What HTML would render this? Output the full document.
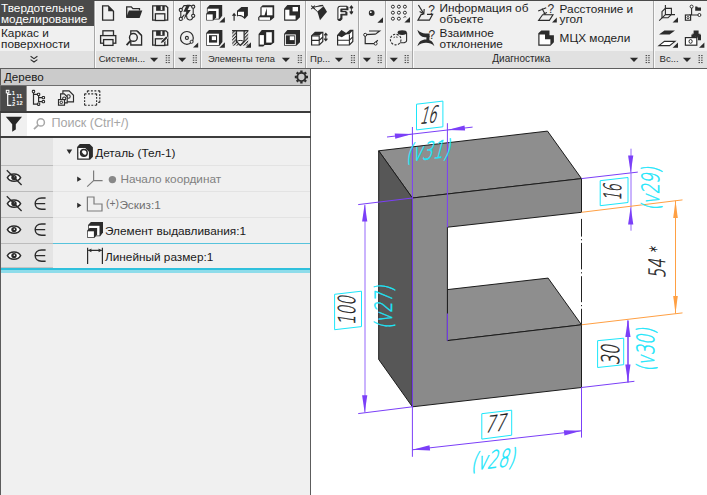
<!DOCTYPE html>
<html lang="ru">
<head>
<meta charset="utf-8">
<title>Деталь</title>
<style>
html,body{margin:0;padding:0;}
body{width:707px;height:495px;overflow:hidden;background:#fff;position:relative;
 font-family:"Liberation Sans","DejaVu Sans",sans-serif;font-size:11.8px;color:#1e1e1e;}
.abs{position:absolute;}
#tb{position:absolute;left:0;top:0;width:707px;height:68px;background:#f0f0f0;}
.sep{position:absolute;top:1px;width:1px;height:67px;background:#a8a8a8;}
.sep::after{content:"";position:absolute;left:1px;top:0;width:1px;height:67px;background:#f9f9f9;}
.lab{position:absolute;top:51.3px;height:16.7px;background:#e1e1e1;}
.lt{position:absolute;top:53px;font-size:9.6px;line-height:12px;color:#2a2a2a;white-space:nowrap;}
.tt{position:absolute;font-size:11.8px;line-height:10.6px;white-space:nowrap;color:#1e1e1e;}
#tree{position:absolute;left:0;top:69px;width:311px;height:426px;background:#f0f0f0;}
.rt{position:absolute;font-size:11.8px;line-height:14px;white-space:nowrap;color:#1a1a1a;}
svg{position:absolute;left:0;top:0;}
</style>
</head>
<body>
<!-- ================= TOOLBAR ================= -->
<div id="tb">
 <div class="abs" style="left:0;top:0;width:707px;height:1px;background:#4a4a4a;"></div>
 <div class="abs" style="left:0;top:0;width:94px;height:25.5px;background:#4a4a4a;"></div>
 <div class="tt" style="left:1px;top:3px;color:#fff;">Твердотельное<br>моделирование</div>
 <div class="tt" style="left:1px;top:28px;">Каркас и<br>поверхности</div>
 <div class="lab" style="left:0;width:94px;"></div>
 <div class="lab" style="left:95px;width:612px;"></div>
 <div class="sep" style="left:94px;"></div>
 <div class="sep" style="left:173px;"></div>
 <div class="sep" style="left:200px;"></div>
 <div class="sep" style="left:305px;"></div>
 <div class="sep" style="left:358px;"></div>
 <div class="sep" style="left:385px;"></div>
 <div class="sep" style="left:412px;"></div>
 <div class="sep" style="left:653px;"></div>
 <div class="abs" style="left:0;top:67.8px;width:707px;height:1.2px;background:#5e5e5e;"></div>
 <div class="lt" style="left:98.7px;">Системн...</div>
 <div class="lt" style="left:208px;font-size:9.3px;">Элементы тела</div>
 <div class="lt" style="left:310px;">Пр...</div>
 <div class="lt" style="left:492.3px;font-size:10px;">Диагностика</div>
 <div class="lt" style="left:659.5px;">Вс...</div>
 <div class="tt" style="left:439.6px;top:3.4px;">Информация об<br>объекте</div>
 <div class="tt" style="left:439.6px;top:28.4px;">Взаимное<br>отклонение</div>
 <div class="tt" style="left:559.6px;top:3.5px;">Расстояние и<br>угол</div>
 <div class="tt" style="left:559.6px;top:33px;">МЦХ модели</div>
</div>
<svg width="707" height="68" viewBox="0 0 707 68">
<defs><pattern id="hatch" width="2.4" height="2.4" patternUnits="userSpaceOnUse" patternTransform="rotate(-45)"><rect width="2.4" height="1.1" fill="#2b2b2b"/></pattern></defs>
<path d="M102.6,5.9 h5.6 l5.3,5.3 v9 h-10.9 z" fill="#f0f0f0" stroke="#2b2b2b" stroke-width="1.3" stroke-linejoin="miter"/>
<path d="M108.2,5.9 l5.3,5.3 h-5.3 z" fill="#2b2b2b"/>
<path d="M126.7,17.3 v-10.4 h4.6 l1.6,1.7 h6.6 v2" fill="none" stroke="#2b2b2b" stroke-width="1.3"/>
<path d="M128.9,10.4 h13.4 l-2.7,7.5 h-13.5 z" fill="#2b2b2b"/>
<path d="M152.7,5.8 h13.2 l1.8,1.8 v12.6 h-15 z" fill="#f0f0f0" stroke="#2b2b2b" stroke-width="1.3"/><rect x="156.1" y="5.8" width="8.6" height="5" fill="#2b2b2b"/><rect x="160.7" y="6.2" width="1.6" height="3.8" fill="#f0f0f0"/><rect x="155.4" y="13.8" width="9.4" height="6.7" fill="#f0f0f0" stroke="#2b2b2b" stroke-width="1.3"/>
<rect x="102.9" y="30.8" width="10.6" height="5" fill="#f0f0f0" stroke="#2b2b2b" stroke-width="1.3"/>
<rect x="100.6" y="35.6" width="15.2" height="7.6" fill="#f0f0f0" stroke="#2b2b2b" stroke-width="1.3"/>
<rect x="103.6" y="39.6" width="9.4" height="5.8" fill="#f0f0f0" stroke="#2b2b2b" stroke-width="1.3"/>
<path d="M130.8,30.8 h6 l4.8,4.8 v9.4 h-10.8 z" fill="#f0f0f0" stroke="#2b2b2b" stroke-width="1.3"/>
<path d="M136.2,30.8 l5.4,5.4 v-1.8 l-3.6,-3.6 z" fill="#2b2b2b"/>
<circle cx="133.4" cy="37.4" r="3.9" fill="#f0f0f0" stroke="#2b2b2b" stroke-width="1.4"/>
<path d="M130.6,40.6 l-4,4.6" stroke="#2b2b2b" stroke-width="1.8" fill="none"/>
<path d="M152.7,30.8 h13.2 l1.8,1.8 v12.6 h-15 z" fill="#f0f0f0" stroke="#2b2b2b" stroke-width="1.3"/><rect x="156.1" y="30.8" width="8.6" height="5" fill="#2b2b2b"/><rect x="160.7" y="31.2" width="1.6" height="3.8" fill="#f0f0f0"/><rect x="155.4" y="38.8" width="9.4" height="6.7" fill="#f0f0f0" stroke="#2b2b2b" stroke-width="1.3"/>
<path d="M160.2,43.6 l1,-2.6 5,-5 1.8,1.8 -5,5 z" fill="#2b2b2b" stroke="#fff" stroke-width="0.8"/>
<path d="M180.8,10 V18.9 M193.2,6.7 V15.8 M180.8,10 L184,5.6 H191.6 M180.8,18.9 L184.4,14.6 M186.6,15.6 C186.6,21.4 192.4,21.4 193.2,15.8" fill="none" stroke="#2b2b2b" stroke-width="1.1"/>
<path d="M190.2,4.8 h-3.4 l-3.4,7 h3 l-3,8.2 7.4,-10 h-3.2 z" fill="#2b2b2b"/>
<circle cx="180.8" cy="10" r="1.6" fill="#f0f0f0" stroke="#2b2b2b" stroke-width="1.1"/>
<circle cx="193.2" cy="6.7" r="1.6" fill="#f0f0f0" stroke="#2b2b2b" stroke-width="1.1"/>
<circle cx="180.8" cy="18.9" r="1.6" fill="#f0f0f0" stroke="#2b2b2b" stroke-width="1.1"/>
<circle cx="193.2" cy="15.8" r="1.6" fill="#f0f0f0" stroke="#2b2b2b" stroke-width="1.1"/>
<circle cx="186.9" cy="37.9" r="6.4" fill="#f0f0f0" stroke="#2b2b2b" stroke-width="1.2"/>
<circle cx="186.9" cy="37.9" r="1.5" fill="#f0f0f0" stroke="#2b2b2b" stroke-width="1.1"/>
<circle cx="191.6" cy="41.8" r="1.5" fill="#f0f0f0" stroke="#2b2b2b" stroke-width="1"/>
<path d="M198.2,47.6 h-5.2 l5.2,-5.2 z" fill="#2b2b2b"/>
<path d="M206.9,8 l2.8,-3 h12.5 v10.799999999999999 l-2.8,3.6 h-12.5 z" fill="#2b2b2b"/><rect x="207.6" y="8.7" width="11.100000000000001" height="10.0" fill="#fff"/>
<path d="M206.2,13.7 l2.7,-2.7 h7.200000000000017 v6.3000000000000025 l-2.7,3.3000000000000003 h-7.200000000000017 z" fill="#2b2b2b"/><rect x="206.89999999999998" y="14.399999999999999" width="5.800000000000017" height="5.500000000000002" fill="#fff"/>
<path d="M224.9,22.6 h-5.6 l5.6,-5.6 z" fill="#2b2b2b"/>
<path d="M234.1,20.8 v-6.6" fill="none" stroke="#2b2b2b" stroke-width="1.2"/>
<path d="M231.8,15.8 l2.3,-3 2.3,3 z" fill="#2b2b2b"/>
<path d="M237,10.8 l4.4,-3.8 h6.5 v8.4 l-3.2,3.6 c-2.6,-3 -5,-3.6 -7.7,-2.6 z" fill="#2b2b2b"/>
<path d="M238,11.8 h6 v5 c-2,-1.8 -3.8,-2.2 -6,-1.6 z" fill="#fff"/>
<path d="M260.4,15 v-7.6 l2.2,-2.2 h11.6 v12.2 l-3.6,3.2 h-12.4 v-3.4 z" fill="#2b2b2b"/>
<rect x="261.6" y="7.3" width="10.9" height="8" fill="#fff"/>
<rect x="259.4" y="17.3" width="10.6" height="2.6" fill="#fff"/>
<path d="M266.8,8 l-2.6,8.6 h2.8 z" fill="#2b2b2b"/>
<path d="M284.1,8.7 l3.3,-3.7 h12.6 v12.2 l-3.6,3.5 h-12.3 z" fill="#2b2b2b"/>
<path d="M285.2,9.8 h4.2 v5.8 h6.2 v4 h-10.4 z" fill="#fff"/>
<rect x="292.6" y="7" width="5.4" height="4.4" fill="#fff"/>
<path d="M206.2,33 l2.8,-3 h13.400000000000006 v12.100000000000003 l-2.8,3.6 h-13.400000000000006 z" fill="#2b2b2b"/><rect x="206.89999999999998" y="33.7" width="12.000000000000007" height="11.300000000000004" fill="#fff"/>
<rect x="209" y="35.2" width="8.1" height="7.4" fill="#2b2b2b"/>
<rect x="211.8" y="36.3" width="4.2" height="3.8" fill="#fff"/>
<path d="M224.9,47.8 h-5.6 l5.6,-5.6 z" fill="#2b2b2b"/>
<rect x="232.2" y="30.4" width="16" height="15.2" fill="url(#hatch)"/>
<path d="M232,30.7 h16.4" stroke="#2b2b2b" stroke-width="1.3"/>
<path d="M236.5,30.8 v10.7 l3.8,4 3.8,-4 v-10.7 z" fill="#f6f6f6" stroke="#2b2b2b" stroke-width="1.2"/>
<path d="M236.5,41.5 c2,-1.4 5.6,-1.4 7.6,0" fill="none" stroke="#2b2b2b" stroke-width="1"/>
<path d="M251,47.8 h-5.6 l5.6,-5.6 z" fill="#2b2b2b"/>
<path d="M258.6,34 l3.2,-4 h12.4 v12.6 l-3.4,2.4 h-6 l-1.6,1.6 h-4.6 z" fill="#2b2b2b"/>
<rect x="259.7" y="35.1" width="4.2" height="9.5" fill="#fff"/>
<rect x="266.2" y="32.2" width="5.6" height="10.4" fill="#fff"/>
<path d="M284.1,33.7 l3.3,-3.7 h12.6 v12.2 l-3.6,3.5 h-12.3 z" fill="#2b2b2b"/>
<rect x="285.4" y="34.9" width="9.9" height="9.7" fill="none" stroke="#fff" stroke-width="0.9"/>
<rect x="289.8" y="36.3" width="4.4" height="3.8" fill="#fff"/>
<path d="M311.2,5.6 l3.6,3.6 M314.8,5.6 l-3.6,3.6" stroke="#2b2b2b" stroke-width="1.1"/>
<path d="M313,7.4 l8.6,-2 M313,7.4 l4.6,4.4" stroke="#2b2b2b" stroke-width="1"/>
<path d="M317.4,11.4 l6.2,-5.2 3.4,5.6 -7,8.4 z" fill="#2b2b2b"/>
<path d="M316.6,6.4 l6,-1.6 1.2,1.4 z" fill="#2b2b2b"/>
<path d="M337.9,19.6 V8.6 Q337.9,6.2 340.3,6.2 H346.9 V9 H340.9 V11.6 H345.9 V14.2 H340.9 V18 L339.3,19.6 Z" transform="translate(1,0.8)" fill="#2b2b2b" stroke="#2b2b2b" stroke-width="1.1" stroke-linejoin="round"/>
<path d="M337.9,19.6 V8.6 Q337.9,6.2 340.3,6.2 H346.9 V9 H340.9 V11.6 H345.9 V14.2 H340.9 V18 L339.3,19.6 Z" fill="#fff" stroke="#2b2b2b" stroke-width="1.1" stroke-linejoin="round"/>
<path d="M351.4,6.2 v7.4 M349.8,8 l1.6,-2.4 1.6,2.4 z M349.8,11.8 l1.6,2.4 1.6,-2.4 z" fill="#2b2b2b" stroke="#2b2b2b" stroke-width="0.9"/>
<path d="M311.6,36 l3.6,-3.6 h7.6 v9 l-3.6,3.6 h-7.6 z" fill="#fff" stroke="#2b2b2b" stroke-width="1.2"/>
<path d="M312,35.6 l3.4,-3.2 h7.4 l-3.4,3.2 z" fill="#2b2b2b"/>
<path d="M311.6,36 h7.6 v9 M311.6,40.4 h7.6 l3.6,-3.4" fill="none" stroke="#2b2b2b" stroke-width="1.1"/>
<path d="M325.8,33.6 v6.8 M324.2,35.4 l1.6,-2 1.6,2 M324.2,38.6 l1.6,2 1.6,-2" fill="none" stroke="#2b2b2b" stroke-width="1.1"/>
<path d="M337.6,35.4 l4,-4.6 4.6,3 4,-3.4 h2.6 v11 l-3.4,3.6 h-11.8 z" fill="#fff" stroke="#2b2b2b" stroke-width="1.2"/>
<path d="M337.6,35.4 l4,-4.6 4.6,3 4,-3.4 h2.6 l-3.4,3.8 h-3 l-4.6,3 z" fill="#2b2b2b"/>
<path d="M337.6,40.2 h11.8 l3.4,-3.4 M349.4,34.6 v10.4" fill="none" stroke="#2b2b2b" stroke-width="1.1"/>
<circle cx="371.7" cy="13" r="2.9" fill="#2b2b2b"/>
<circle cx="370.8" cy="12.2" r="0.9" fill="#fff"/>
<path d="M383,22.8 h-5.6 l5.6,-5.6 z" fill="#2b2b2b"/>
<path d="M365.2,35.4 v8.2 h9 l3.6,-3.4 M365.2,34.6 l10,-0.4 M369,31 h10.6 l-4.4,3.4" fill="none" stroke="#2b2b2b" stroke-width="1.2"/>
<circle cx="365.2" cy="34.8" r="1.5" fill="#fff" stroke="#2b2b2b" stroke-width="1"/>
<circle cx="375.6" cy="43.6" r="1.5" fill="#fff" stroke="#2b2b2b" stroke-width="1"/>
<circle cx="392.9" cy="6.7" r="1.5" fill="#fff" stroke="#2b2b2b" stroke-width="1"/>
<circle cx="392.9" cy="12.7" r="1.5" fill="#fff" stroke="#2b2b2b" stroke-width="1"/>
<circle cx="392.9" cy="18.7" r="1.5" fill="#fff" stroke="#2b2b2b" stroke-width="1"/>
<circle cx="398.9" cy="6.7" r="1.5" fill="#fff" stroke="#2b2b2b" stroke-width="1"/>
<circle cx="398.9" cy="12.7" r="1.5" fill="#fff" stroke="#2b2b2b" stroke-width="1"/>
<circle cx="398.9" cy="18.7" r="1.5" fill="#fff" stroke="#2b2b2b" stroke-width="1"/>
<circle cx="404.9" cy="6.7" r="1.5" fill="#fff" stroke="#2b2b2b" stroke-width="1"/>
<circle cx="404.9" cy="12.7" r="1.5" fill="#fff" stroke="#2b2b2b" stroke-width="1"/>
<path d="M403.6,17.6 a1.6,1.6 0 0 1 2.6,-0.4" fill="none" stroke="#2b2b2b" stroke-width="1"/>
<path d="M410,22.6 h-5.6 l5.6,-5.6 z" fill="#2b2b2b"/>
<path d="M398,35 v6.4 c0,2 8.6,2 8.6,-1 v-7.6" fill="#f0f0f0" stroke="#2b2b2b" stroke-width="1.1"/>
<ellipse cx="402.2" cy="32.6" rx="4.6" ry="2.4" fill="#2b2b2b"/>
<circle cx="395.7" cy="39.6" r="5.3" fill="#f0f0f0" stroke="#2b2b2b" stroke-width="1.1" stroke-dasharray="2.2 1.4"/>
<path d="M393.6,37.6 c1.4,-1 3,-1 4.4,0" fill="none" stroke="#2b2b2b" stroke-width="0.9" stroke-dasharray="1.6 1"/>
<path d="M418.4,5 l5.2,8.4" fill="none" stroke="#2b2b2b" stroke-width="1.2"/>
<path d="M419.6,11.4 l4.2,2.4 0.4,-4.8" fill="none" stroke="#2b2b2b" stroke-width="1.2"/>
<path d="M427,14.4 h5.6 l-3.2,5.8 h-11.4 l3.2,-5.8 h2.2" fill="none" stroke="#2b2b2b" stroke-width="1.2" />
<text x="428.2" y="14.4" font-family="Liberation Sans,sans-serif" font-size="12" fill="#2b2b2b">?</text>
<path d="M417.4,29.8 C420,32.6 422.6,33.4 425.6,33.4 H429.6 V37.2 H425 C421,37.2 418.6,34.6 417.4,29.8 Z" fill="#2b2b2b"/>
<path d="M417.4,46.2 C418.6,41.4 421.6,39.4 426,39.4 C430.4,39.4 433.2,41.4 434.4,46.2 C432,43.6 429.2,42.8 426,42.8 C422.8,42.8 420,43.6 417.4,46.2 Z" fill="#2b2b2b"/>
<rect x="426.4" y="36" width="3" height="4.4" fill="#2b2b2b"/>
<text x="428.6" y="39.2" font-family="Liberation Sans,sans-serif" font-size="12" fill="#2b2b2b">?</text>
<path d="M538.2,11 l8,-3.2 M542,8.6 l3.4,6.2 M543.4,14 l3.6,-1.4" fill="none" stroke="#2b2b2b" stroke-width="1.1"/>
<path d="M542.6,14.8 h10.4 l-3.6,5.6 h-10.8 z" fill="none" stroke="#2b2b2b" stroke-width="1.1"/>
<text x="547.6" y="12.6" font-family="Liberation Sans,sans-serif" font-size="12" fill="#2b2b2b">?</text>
<path d="M556.8,22.4 h-4.8 l4.8,-4.8 z" fill="#2b2b2b"/>
<path d="M541.3,30.4 h8.2 v4.9 h4.4 v7 l-3.4,3.4 h-12.2 v-12.4 z" fill="#2b2b2b"/>
<path d="M539.5,34.4 h5.5 v4.8 h5.4 v5.3 h-10.9 z" fill="#fff"/>
<path d="M665.4,5 v9.6 M665.4,14.6 h9.6 M665.4,14.6 l-6.2,6" fill="none" stroke="#2b2b2b" stroke-width="1.1"/>
<path d="M662,11.6 l3.4,-3.2 h6 v6 l-3.4,3.4 h-6 z M662,11.6 v6.2 " fill="none" stroke="#2b2b2b" stroke-width="1.1"/>
<path d="M678,22.6 h-5.4 l5.4,-5.4 z" fill="#2b2b2b"/>
<path d="M691.6,7.6 v7.4 M691.6,15 h6.6 M691.6,15 h-2.4" fill="none" stroke="#2b2b2b" stroke-width="1.1"/>
<circle cx="691.6" cy="6.6" r="1.5" fill="#fff" stroke="#2b2b2b" stroke-width="1"/>
<circle cx="699.4" cy="15" r="1.5" fill="#fff" stroke="#2b2b2b" stroke-width="1"/>
<path d="M695.2,6.6 h2 l0.6,0.8 h3.2 v3.4 h-5.8 z" fill="#2b2b2b"/>
<rect x="685.4" y="15" width="5.2" height="5.2" fill="#fff" stroke="#2b2b2b" stroke-width="1.2"/>
<circle cx="688" cy="17.6" r="1.1" fill="#fff" stroke="#2b2b2b" stroke-width="0.9"/>
<path d="M664.4,30.4 h10.6 l-5.4,4.2 h-10.6 z" fill="#2b2b2b"/>
<path d="M664.4,41.4 h10.6 l-5.4,4.2 h-10.6 z" fill="#fff" stroke="#2b2b2b" stroke-width="1.1"/>
<path d="M678,47.8 h-5.4 l5.4,-5.4 z" fill="#2b2b2b"/>
<path d="M693.6,30.4 h5 v3.4 h2 l-4.4,3.6 l-4.4,-3.6 h1.8 z" fill="#2b2b2b"/>
<path d="M691.4,37.6 v-3 h2 l2.8,2.6 2.8,-2.6 h2 v5.6 h-3 v-2.6 z" fill="#2b2b2b"/>
<rect x="685.4" y="37.6" width="11.4" height="7.6" fill="#fff" stroke="#2b2b2b" stroke-width="1.2"/>
<ellipse cx="690.6" cy="41.4" rx="1.6" ry="1.9" fill="#fff" stroke="#2b2b2b" stroke-width="1"/>
<path d="M704.4,47.8 h-5.4 l5.4,-5.4 z" fill="#2b2b2b"/>
<path d="M150.0,57.8 h8.2 l-4.1,4.2 z" fill="#2b2b2b"/>
<path d="M178.1,57.8 h8.2 l-4.1,4.2 z" fill="#2b2b2b"/>
<path d="M281.8,57.8 h8.2 l-4.1,4.2 z" fill="#2b2b2b"/>
<path d="M334.8,57.8 h8.2 l-4.1,4.2 z" fill="#2b2b2b"/>
<path d="M362.8,57.8 h8.2 l-4.1,4.2 z" fill="#2b2b2b"/>
<path d="M389.7,57.8 h8.2 l-4.1,4.2 z" fill="#2b2b2b"/>
<rect x="165.70000000000002" y="55" width="1.5" height="1.1" fill="#4e4e4e"/><rect x="165.70000000000002" y="57.3" width="1.5" height="1.1" fill="#4e4e4e"/><rect x="165.70000000000002" y="59.7" width="1.5" height="1.1" fill="#4e4e4e"/><rect x="165.70000000000002" y="62" width="1.5" height="1.1" fill="#4e4e4e"/><rect x="168.3" y="55" width="1.5" height="1.1" fill="#4e4e4e"/><rect x="168.3" y="57.3" width="1.5" height="1.1" fill="#4e4e4e"/><rect x="168.3" y="59.7" width="1.5" height="1.1" fill="#4e4e4e"/><rect x="168.3" y="62" width="1.5" height="1.1" fill="#4e4e4e"/>
<rect x="192.8" y="55" width="1.5" height="1.1" fill="#4e4e4e"/><rect x="192.8" y="57.3" width="1.5" height="1.1" fill="#4e4e4e"/><rect x="192.8" y="59.7" width="1.5" height="1.1" fill="#4e4e4e"/><rect x="192.8" y="62" width="1.5" height="1.1" fill="#4e4e4e"/><rect x="195.4" y="55" width="1.5" height="1.1" fill="#4e4e4e"/><rect x="195.4" y="57.3" width="1.5" height="1.1" fill="#4e4e4e"/><rect x="195.4" y="59.7" width="1.5" height="1.1" fill="#4e4e4e"/><rect x="195.4" y="62" width="1.5" height="1.1" fill="#4e4e4e"/>
<rect x="297.8" y="55" width="1.5" height="1.1" fill="#4e4e4e"/><rect x="297.8" y="57.3" width="1.5" height="1.1" fill="#4e4e4e"/><rect x="297.8" y="59.7" width="1.5" height="1.1" fill="#4e4e4e"/><rect x="297.8" y="62" width="1.5" height="1.1" fill="#4e4e4e"/><rect x="300.4" y="55" width="1.5" height="1.1" fill="#4e4e4e"/><rect x="300.4" y="57.3" width="1.5" height="1.1" fill="#4e4e4e"/><rect x="300.4" y="59.7" width="1.5" height="1.1" fill="#4e4e4e"/><rect x="300.4" y="62" width="1.5" height="1.1" fill="#4e4e4e"/>
<rect x="350.90000000000003" y="55" width="1.5" height="1.1" fill="#4e4e4e"/><rect x="350.90000000000003" y="57.3" width="1.5" height="1.1" fill="#4e4e4e"/><rect x="350.90000000000003" y="59.7" width="1.5" height="1.1" fill="#4e4e4e"/><rect x="350.90000000000003" y="62" width="1.5" height="1.1" fill="#4e4e4e"/><rect x="353.5" y="55" width="1.5" height="1.1" fill="#4e4e4e"/><rect x="353.5" y="57.3" width="1.5" height="1.1" fill="#4e4e4e"/><rect x="353.5" y="59.7" width="1.5" height="1.1" fill="#4e4e4e"/><rect x="353.5" y="62" width="1.5" height="1.1" fill="#4e4e4e"/>
<rect x="377.7" y="55" width="1.5" height="1.1" fill="#4e4e4e"/><rect x="377.7" y="57.3" width="1.5" height="1.1" fill="#4e4e4e"/><rect x="377.7" y="59.7" width="1.5" height="1.1" fill="#4e4e4e"/><rect x="377.7" y="62" width="1.5" height="1.1" fill="#4e4e4e"/><rect x="380.29999999999995" y="55" width="1.5" height="1.1" fill="#4e4e4e"/><rect x="380.29999999999995" y="57.3" width="1.5" height="1.1" fill="#4e4e4e"/><rect x="380.29999999999995" y="59.7" width="1.5" height="1.1" fill="#4e4e4e"/><rect x="380.29999999999995" y="62" width="1.5" height="1.1" fill="#4e4e4e"/>
<rect x="404.6" y="55" width="1.5" height="1.1" fill="#4e4e4e"/><rect x="404.6" y="57.3" width="1.5" height="1.1" fill="#4e4e4e"/><rect x="404.6" y="59.7" width="1.5" height="1.1" fill="#4e4e4e"/><rect x="404.6" y="62" width="1.5" height="1.1" fill="#4e4e4e"/><rect x="407.2" y="55" width="1.5" height="1.1" fill="#4e4e4e"/><rect x="407.2" y="57.3" width="1.5" height="1.1" fill="#4e4e4e"/><rect x="407.2" y="59.7" width="1.5" height="1.1" fill="#4e4e4e"/><rect x="407.2" y="62" width="1.5" height="1.1" fill="#4e4e4e"/>
<path d="M629.9000000000001,57.8 h8.2 l-4.1,4.2 z" fill="#2b2b2b"/>
<rect x="645.5999999999999" y="55" width="1.5" height="1.1" fill="#4e4e4e"/><rect x="645.5999999999999" y="57.3" width="1.5" height="1.1" fill="#4e4e4e"/><rect x="645.5999999999999" y="59.7" width="1.5" height="1.1" fill="#4e4e4e"/><rect x="645.5999999999999" y="62" width="1.5" height="1.1" fill="#4e4e4e"/><rect x="648.1999999999999" y="55" width="1.5" height="1.1" fill="#4e4e4e"/><rect x="648.1999999999999" y="57.3" width="1.5" height="1.1" fill="#4e4e4e"/><rect x="648.1999999999999" y="59.7" width="1.5" height="1.1" fill="#4e4e4e"/><rect x="648.1999999999999" y="62" width="1.5" height="1.1" fill="#4e4e4e"/>
<path d="M682.9000000000001,57.8 h8.2 l-4.1,4.2 z" fill="#2b2b2b"/>
<rect x="698.5" y="55" width="1.5" height="1.1" fill="#4e4e4e"/><rect x="698.5" y="57.3" width="1.5" height="1.1" fill="#4e4e4e"/><rect x="698.5" y="59.7" width="1.5" height="1.1" fill="#4e4e4e"/><rect x="698.5" y="62" width="1.5" height="1.1" fill="#4e4e4e"/><rect x="701.1" y="55" width="1.5" height="1.1" fill="#4e4e4e"/><rect x="701.1" y="57.3" width="1.5" height="1.1" fill="#4e4e4e"/><rect x="701.1" y="59.7" width="1.5" height="1.1" fill="#4e4e4e"/><rect x="701.1" y="62" width="1.5" height="1.1" fill="#4e4e4e"/>
<path d="M30.6,56.2 l3.4,2.4 3.4,-2.4 M30.6,59.6 l3.4,2.4 3.4,-2.4" fill="none" stroke="#2b2b2b" stroke-width="1.1"/>
</svg>

<!-- ================= TREE PANEL ================= -->
<div id="tree">
 <div class="abs" style="left:0;top:0;width:311px;height:426px;background:#f0f0f0;"></div>
 <div class="abs" style="left:0;top:0;width:1px;height:426px;background:#5c5c5c;"></div>
 <div class="abs" style="left:310px;top:0;width:1px;height:426px;background:#5c5c5c;"></div>
 <div class="abs" style="left:1px;top:0;width:309px;height:16px;background:#cbcbcb;"></div>
 <div class="abs" style="left:0;top:16px;width:311px;height:1px;background:#6e6e6e;"></div>
 <div class="abs" style="left:0;top:42px;width:311px;height:1.5px;background:#3c3c3c;"></div>
 <div class="abs" style="left:27px;top:43.5px;width:283px;height:24px;background:#fff;"></div>
 <div class="abs" style="left:0;top:67.3px;width:311px;height:1.6px;background:#3c3c3c;"></div>
 <div class="abs" style="left:1px;top:69px;width:52px;height:131px;background:#e4e4e4;"></div>
 <div class="abs" style="left:1px;top:96px;width:52px;height:1px;background:#bcbcbc;"></div>
 <div class="abs" style="left:53px;top:96px;width:257px;height:1px;background:#e3e3e3;"></div>
 <div class="abs" style="left:1px;top:122px;width:52px;height:1px;background:#bcbcbc;"></div>
 <div class="abs" style="left:53px;top:122px;width:257px;height:1px;background:#e3e3e3;"></div>
 <div class="abs" style="left:1px;top:148px;width:52px;height:1px;background:#bcbcbc;"></div>
 <div class="abs" style="left:53px;top:148px;width:257px;height:1px;background:#e3e3e3;"></div>
 <div class="abs" style="left:1px;top:174px;width:52px;height:1px;background:#bcbcbc;"></div>
 <div class="abs" style="left:53px;top:174px;width:257px;height:1px;background:#57c3dc;"></div>
 <div class="abs" style="left:1px;top:198px;width:52px;height:1px;background:#c4c4c4;"></div>
 <div class="abs" style="left:1px;top:199px;width:309px;height:2px;background:#2fc0dc;"></div>
 <div class="abs" style="left:1px;top:201px;width:309px;height:3.2px;background:#8edcea;"></div>
 <div class="rt" style="left:4px;top:1.2px;font-size:11.6px;">Дерево</div>
 <div class="rt" style="left:51.4px;top:47px;font-size:12.6px;color:#a6a6a6;">Поиск (Ctrl+/)</div>
 <div class="rt" style="left:95.2px;top:77px;">Деталь (Тел-1)</div>
 <div class="rt" style="left:120.4px;top:102.6px;color:#808080;">Начало координат</div>
 <div class="rt" style="left:106px;top:128.2px;color:#707070;font-size:10.4px;">(+)</div>
 <div class="rt" style="left:119.4px;top:128.6px;color:#707070;">Эскиз:1</div>
 <div class="rt" style="left:105px;top:154.6px;">Элемент выдавливания:1</div>
 <div class="rt" style="left:105px;top:180.6px;">Линейный размер:1</div>
</div>
<svg width="311" height="495" viewBox="0 0 311 495">
<rect x="1" y="86" width="25.6" height="25" fill="#4a4a4a"/>
<path d="M7.7,92.8 v12.5 h3.8 M7.7,94.4 h3.6" fill="none" stroke="#fff" stroke-width="1.2"/>
<rect x="6.3" y="90.3" width="2.6" height="2.6" fill="#4a4a4a" stroke="#fff" stroke-width="1"/>
<text x="11.8" y="95.2" font-family="Liberation Sans,sans-serif" font-size="5.8" font-weight="bold" fill="#fff">1</text>
<text x="12.2" y="101.0" font-family="Liberation Sans,sans-serif" font-size="5.8" font-weight="bold" fill="#fff">1</text>
<text x="12.0" y="106.4" font-family="Liberation Sans,sans-serif" font-size="5.8" font-weight="bold" fill="#fff">2</text>
<text x="16.2" y="98.4" font-family="Liberation Sans,sans-serif" font-size="5.8" font-weight="bold" fill="#fff">11</text>
<text x="16.2" y="104.6" font-family="Liberation Sans,sans-serif" font-size="5.8" font-weight="bold" fill="#fff">12</text>
<path d="M33.5,92.6 v11.6 h4 M33.5,94.4 h4 M38.6,95.6 v6 h3.8 M38.6,97.6 h3.8" fill="none" stroke="#2b2b2b" stroke-width="1.2"/>
<rect x="32.35" y="90.35" width="2.3" height="2.3" rx="0.6" fill="#f0f0f0" stroke="#2b2b2b" stroke-width="1.05"/>
<rect x="37.45" y="93.25" width="2.3" height="2.3" rx="0.6" fill="#f0f0f0" stroke="#2b2b2b" stroke-width="1.05"/>
<rect x="37.45" y="103.05" width="2.3" height="2.3" rx="0.6" fill="#f0f0f0" stroke="#2b2b2b" stroke-width="1.05"/>
<rect x="42.25" y="96.44999999999999" width="2.3" height="2.3" rx="0.6" fill="#f0f0f0" stroke="#2b2b2b" stroke-width="1.05"/>
<rect x="42.25" y="100.44999999999999" width="2.3" height="2.3" rx="0.6" fill="#f0f0f0" stroke="#2b2b2b" stroke-width="1.05"/>
<path d="M62.9,90.9 h6.2 l4.4,4.4 v6.6 h-10.6 z" fill="#f0f0f0" stroke="#2b2b2b" stroke-width="1.15"/>
<circle cx="68.5" cy="96.5" r="1.7" fill="#f0f0f0" stroke="#2b2b2b" stroke-width="1.05"/>
<path d="M60.6,93.8 h3.6 l3,3 v6 h-6.6 z" fill="#f0f0f0" stroke="#2b2b2b" stroke-width="1.15"/>
<circle cx="64.2" cy="98.6" r="1.6" fill="#f0f0f0" stroke="#2b2b2b" stroke-width="1.05"/>
<rect x="58.5" y="99.6" width="6" height="5.6" fill="#f0f0f0" stroke="#2b2b2b" stroke-width="1.15"/>
<circle cx="61.3" cy="102.4" r="1.25" fill="#f0f0f0" stroke="#2b2b2b" stroke-width="1"/>
<path d="M84.6,93.8 L96.6,93.8" fill="none" stroke="#2b2b2b" stroke-width="1.15" stroke-dasharray="1.9 1.467"/>
<path d="M84.6,105.2 L96.6,105.2" fill="none" stroke="#2b2b2b" stroke-width="1.15" stroke-dasharray="1.9 1.467"/>
<path d="M84.6,93.8 L84.6,105.2" fill="none" stroke="#2b2b2b" stroke-width="1.15" stroke-dasharray="1.9 1.267"/>
<path d="M96.6,93.8 L96.6,105.2" fill="none" stroke="#2b2b2b" stroke-width="1.15" stroke-dasharray="1.9 1.267"/>
<path d="M87.4,90.8 L99.8,90.8" fill="none" stroke="#2b2b2b" stroke-width="1.15" stroke-dasharray="1.9 1.600"/>
<path d="M99.8,90.8 L99.8,102.4" fill="none" stroke="#2b2b2b" stroke-width="1.15" stroke-dasharray="1.9 1.333"/>
<path d="M87.4,90.8 v1.6 M98.2,102.4 h1.6" fill="none" stroke="#2b2b2b" stroke-width="1.15"/>
<path d="M306.00,77.00 L308.00,77.00 M304.65,80.25 L306.07,81.67 M301.40,81.60 L301.40,83.60 M298.15,80.25 L296.73,81.67 M296.80,77.00 L294.80,77.00 M298.15,73.75 L296.73,72.33 M301.40,72.40 L301.40,70.40 M304.65,73.75 L306.07,72.33 " stroke="#2b2b2b" stroke-width="2.4" fill="none"/>
<circle cx="301.4" cy="77" r="4.1" fill="none" stroke="#2b2b2b" stroke-width="1.9"/>
<path d="M5.8,116.8 h16.2 l-6.2,7.4 v5.4 l-3.6,2.2 v-7.6 z" fill="#262626"/>
<circle cx="40.8" cy="122.4" r="3.6" fill="none" stroke="#a8a8a8" stroke-width="1.5"/>
<path d="M38.2,125.2 l-4.2,4" stroke="#a8a8a8" stroke-width="1.8"/>
<path d="M66.6,149.6 h5.6 l-2.8,4.4 z" fill="#2b2b2b"/>
<path d="M77.2,176.6 l4.2,2.6 -4.2,2.6 z" fill="#2b2b2b"/>
<path d="M77.2,202.70000000000002 l4.2,2.6 -4.2,2.6 z" fill="#2b2b2b"/>
<path d="M77.1,146.9 l2.7,-2.9 h9.8 l3.3,3.3 v9.5 l-2.9,2.9 h-12.9 z" fill="#2b2b2b"/>
<path d="M78.4,148.1 h6.8 l3.7,3.7 v6.7 h-10.5 z" fill="#fff"/>
<circle cx="83.9" cy="152.9" r="3.3" fill="#fff" stroke="#2b2b2b" stroke-width="1.5"/>
<path d="M81.5,150.4 a3.4,3.4 0 0 0 4.8,4.8 a4.4,4.4 0 0 1 -4.8,-4.8 z" fill="#2b2b2b" stroke="#2b2b2b" stroke-width="0.8"/>
<path d="M93.6,170.4 v10.2 h9 M93.6,180.6 l-6.4,6" fill="none" stroke="#7c7c7c" stroke-width="1.2"/>
<circle cx="112.4" cy="179.6" r="3.7" fill="#888"/>
<path d="M87.4,197 h6.6 v7 h8 v7 h-14.6 z" fill="none" stroke="#7c7c7c" stroke-width="1.2"/>
<path d="M88.1,225.1 l2.8,-3.1 h12.100000000000009 v10.499999999999995 l-2.8,3.7 h-12.100000000000009 z" fill="#2b2b2b"/><rect x="88.79999999999998" y="225.79999999999998" width="10.70000000000001" height="9.699999999999996" fill="#fff"/>
<path d="M87.1,230.6 l2.5,-2.6 h7.5 v6.499999999999995 l-2.5,3.2 h-7.5 z" fill="#2b2b2b"/><rect x="87.79999999999998" y="231.29999999999998" width="6.1" height="5.699999999999994" fill="#fff"/>
<path d="M87.6,247.8 v16.2 M102.4,247.8 v16.2 M88.4,250.4 h13.2" fill="none" stroke="#2b2b2b" stroke-width="1.2"/>
<path d="M88.2,250.4 l3.2,-1.9 v3.8 z M101.8,250.4 l-3.2,-1.9 v3.8 z" fill="#2b2b2b"/>
<path d="M7.4,177.6 c2.6,-4.9 10.6,-4.9 13.2,0 c-2.6,4.9 -10.6,4.9 -13.2,0 z" fill="#fff" stroke="#2b2b2b" stroke-width="1.5"/><circle cx="14" cy="177.6" r="2.7" fill="#2b2b2b"/><circle cx="14.3" cy="177.2" r="0.75" fill="#fff"/><path d="M6.8,170.2 L21.6,185.0" stroke="#2b2b2b" stroke-width="1.3"/>
<path d="M7.4,203.6 c2.6,-4.9 10.6,-4.9 13.2,0 c-2.6,4.9 -10.6,4.9 -13.2,0 z" fill="#fff" stroke="#2b2b2b" stroke-width="1.5"/><circle cx="14" cy="203.6" r="2.7" fill="#2b2b2b"/><circle cx="14.3" cy="203.2" r="0.75" fill="#fff"/><path d="M6.8,196.2 L21.6,211.0" stroke="#2b2b2b" stroke-width="1.3"/>
<path d="M7.4,229.6 c2.6,-4.9 10.6,-4.9 13.2,0 c-2.6,4.9 -10.6,4.9 -13.2,0 z" fill="#fff" stroke="#2b2b2b" stroke-width="1.5"/><circle cx="14" cy="229.6" r="2.7" fill="#2b2b2b"/><circle cx="14.3" cy="229.2" r="0.75" fill="#fff"/>
<path d="M7.4,255.6 c2.6,-4.9 10.6,-4.9 13.2,0 c-2.6,4.9 -10.6,4.9 -13.2,0 z" fill="#fff" stroke="#2b2b2b" stroke-width="1.5"/><circle cx="14" cy="255.6" r="2.7" fill="#2b2b2b"/><circle cx="14.3" cy="255.2" r="0.75" fill="#fff"/>
<path d="M45.6,198.0 h-4 c-8.6,0 -8.6,11.2 0,11.2 h4 M35.0,203.6 h10.2" fill="none" stroke="#2b2b2b" stroke-width="1.4"/>
<path d="M45.6,224.0 h-4 c-8.6,0 -8.6,11.2 0,11.2 h4 M35.0,229.6 h10.2" fill="none" stroke="#2b2b2b" stroke-width="1.4"/>
<path d="M45.6,250.0 h-4 c-8.6,0 -8.6,11.2 0,11.2 h4 M35.0,255.6 h10.2" fill="none" stroke="#2b2b2b" stroke-width="1.4"/>
</svg>

<!-- ================= 3D VIEW ================= -->
<svg width="707" height="495" viewBox="0 0 707 495">
<polygon points="378.7,150.8 547.5,131.1 581.5,178.6 412.4,198.0" fill="#8e8e8e" stroke="#1c1c1c" stroke-width="1" stroke-linejoin="round"/>
<polygon points="378.7,150.8 412.4,198.0 412.4,406.8 378.7,359.4" fill="#575757" stroke="#1c1c1c" stroke-width="1" stroke-linejoin="round"/>
<polygon points="447.4,289.6 548.1,278.1 581.5,324.8 447.4,340.6" fill="#8e8e8e" stroke="#1c1c1c" stroke-width="1" stroke-linejoin="round"/>
<polygon points="412.4,198.0 581.5,178.6 581.5,212.3 447.4,227.2 447.4,340.6 581.5,324.8 581.5,387.5 412.4,406.8" fill="#8a8a8a" stroke="#1c1c1c" stroke-width="1" stroke-linejoin="round"/>
<line x1="412.4" y1="127.0" x2="412.4" y2="456.8" stroke="#7b3ff8" stroke-width="1.0" />
<line x1="447.4" y1="123.2" x2="447.4" y2="227.2" stroke="#7b3ff8" stroke-width="1.0" />
<line x1="447.4" y1="313.5" x2="447.4" y2="340.6" stroke="#7b3ff8" stroke-width="1.0" />
<line x1="387.0" y1="137.0" x2="472.6" y2="127.1" stroke="#7b3ff8" stroke-width="1.0" />
<polygon points="412.4,134.1 395.3,138.7 394.7,133.5" fill="#7b3ff8"/>
<polygon points="447.4,130.0 464.5,125.4 465.1,130.6" fill="#7b3ff8"/>
<polygon points="416.5,104.2 442.9,101.1 442.9,126.8 416.5,129.9" fill="#fff" stroke="#1ce6fa" stroke-width="1"/>
<line x1="412.4" y1="198.0" x2="358.2" y2="204.6" stroke="#7b3ff8" stroke-width="1.0" />
<line x1="412.4" y1="406.8" x2="358.2" y2="413.6" stroke="#7b3ff8" stroke-width="1.0" />
<line x1="365.0" y1="205.0" x2="365.0" y2="412.8" stroke="#9568fb" stroke-width="1.0" />
<polygon points="364.7,203.9 367.3,221.4 362.1,221.4" fill="#7b3ff8"/>
<polygon points="364.7,412.8 362.1,395.3 367.3,395.3" fill="#7b3ff8"/>
<line x1="581.5" y1="387.5" x2="581.5" y2="437.6" stroke="#7b3ff8" stroke-width="1.0" />
<line x1="412.4" y1="449.8" x2="581.5" y2="430.8" stroke="#7b3ff8" stroke-width="1.0" />
<polygon points="412.4,449.8 429.5,445.2 430.1,450.4" fill="#7b3ff8"/>
<polygon points="581.5,430.8 564.4,435.4 563.8,430.2" fill="#7b3ff8"/>
<line x1="581.5" y1="178.6" x2="637.8" y2="172.1" stroke="#7b3ff8" stroke-width="1.0" />
<line x1="631.0" y1="148.7" x2="631.0" y2="230.7" stroke="#9568fb" stroke-width="1.0" />
<polygon points="630.7,172.9 628.1,155.4 633.3,155.4" fill="#7b3ff8"/>
<polygon points="630.7,207.0 633.3,224.5 628.1,224.5" fill="#7b3ff8"/>
<line x1="581.5" y1="212.3" x2="682.5" y2="199.9" stroke="#ffa043" stroke-width="1.0" />
<line x1="581.5" y1="324.8" x2="682.5" y2="312.9" stroke="#ffa043" stroke-width="1.0" />
<line x1="675.5" y1="200.6" x2="675.5" y2="313.6" stroke="#ffa043" stroke-width="1.0" />
<polygon points="675.5,200.6 677.8,218.1 673.2,218.1" fill="#ffa043"/>
<polygon points="675.5,313.6 673.2,296.1 677.8,296.1" fill="#ffa043"/>
<line x1="581.5" y1="218.9" x2="581.5" y2="236.6" stroke="#222" stroke-width="1" />
<line x1="581.5" y1="239.1" x2="581.5" y2="240.3" stroke="#222" stroke-width="1" />
<line x1="581.5" y1="242.9" x2="581.5" y2="269.4" stroke="#222" stroke-width="1" />
<line x1="581.5" y1="272.2" x2="581.5" y2="273.4" stroke="#222" stroke-width="1" />
<line x1="581.5" y1="276.2" x2="581.5" y2="302.2" stroke="#222" stroke-width="1" />
<line x1="581.5" y1="305.0" x2="581.5" y2="306.2" stroke="#222" stroke-width="1" />
<line x1="581.5" y1="308.8" x2="581.5" y2="324.8" stroke="#222" stroke-width="1" />
<line x1="581.5" y1="387.5" x2="634.4" y2="381.3" stroke="#7b3ff8" stroke-width="1.0" />
<line x1="628.0" y1="320.5" x2="628.0" y2="382.4" stroke="#7b3ff8" stroke-width="1.5" />
<polygon points="627.9,319.4 630.5,336.9 625.3,336.9" fill="#7b3ff8"/>
<polygon points="627.9,382.0 625.3,364.5 630.5,364.5" fill="#7b3ff8"/>
<polygon points="334.6,294.3 361.5,291.2 361.5,326.6 334.6,329.7" fill="#fff" stroke="#1ce6fa" stroke-width="1"/>
<polygon points="481.8,413.7 511.7,410.2 511.7,435.2 481.8,439.1" fill="#fff" stroke="#1ce6fa" stroke-width="1"/>
<polygon points="600.2,180.7 628,177.5 628,202.5 600.2,205.7" fill="#fff" stroke="#1ce6fa" stroke-width="1"/>
<polygon points="597.6,340.7 623.7,338.2 623.7,364.7 597.6,367.5" fill="#fff" stroke="#1ce6fa" stroke-width="1"/>
<text transform="matrix(0.5800 -0.0671 -0.2680 1.0310 419.4 124.0)" font-family="DejaVu Sans,Liberation Sans,sans-serif" font-weight="200" font-size="22.5" fill="#1a1a1a" stroke="#1a1a1a" stroke-width="0.45">16</text>
<text transform="matrix(0.6900 -0.0798 -0.2680 1.0310 405.6 161.8)" font-family="DejaVu Sans,Liberation Sans,sans-serif" font-weight="200" font-size="24" fill="#1ce6fa" stroke="#1ce6fa" stroke-width="0.55">(v31)</text>
<text transform="matrix(0.7200 -0.0833 -0.2680 1.0310 484.4 432.8)" font-family="DejaVu Sans,Liberation Sans,sans-serif" font-weight="200" font-size="22.5" fill="#1a1a1a" stroke="#1a1a1a" stroke-width="0.45">77</text>
<text transform="matrix(0.6900 -0.0798 -0.2680 1.0310 470.6 470.6)" font-family="DejaVu Sans,Liberation Sans,sans-serif" font-weight="200" font-size="24" fill="#1ce6fa" stroke="#1ce6fa" stroke-width="0.55">(v28)</text>
<text transform="matrix(0.0000 -0.6550 1.0000 0.1523 354.8 325.0)" font-family="DejaVu Sans,Liberation Sans,sans-serif" font-weight="200" font-size="23.3" fill="#1a1a1a" stroke="#1a1a1a" stroke-width="0.45">100</text>
<text transform="matrix(0.0000 -0.6900 1.0000 0.1523 391.8 329.0)" font-family="DejaVu Sans,Liberation Sans,sans-serif" font-weight="200" font-size="24" fill="#1ce6fa" stroke="#1ce6fa" stroke-width="0.55">(v27)</text>
<text transform="matrix(0.0000 -0.5300 1.0000 0.1523 620.9 200.4)" font-family="DejaVu Sans,Liberation Sans,sans-serif" font-weight="200" font-size="24" fill="#1a1a1a" stroke="#1a1a1a" stroke-width="0.45">16</text>
<text transform="matrix(0.0000 -0.6900 1.0000 0.1523 658.6 210.6)" font-family="DejaVu Sans,Liberation Sans,sans-serif" font-weight="200" font-size="24" fill="#1ce6fa" stroke="#1ce6fa" stroke-width="0.55">(v29)</text>
<text transform="matrix(0.0000 -0.6600 1.0000 0.1523 618.5 365.2)" font-family="DejaVu Sans,Liberation Sans,sans-serif" font-weight="200" font-size="24.3" fill="#1a1a1a" stroke="#1a1a1a" stroke-width="0.45">30</text>
<text transform="matrix(0.0000 -0.6900 1.0000 0.1523 654.4 371.6)" font-family="DejaVu Sans,Liberation Sans,sans-serif" font-weight="200" font-size="24" fill="#1ce6fa" stroke="#1ce6fa" stroke-width="0.55">(v30)</text>
<text transform="matrix(0.0000 -0.6800 1.0000 0.1523 665.2 278.2)" font-family="DejaVu Sans,Liberation Sans,sans-serif" font-weight="200" font-size="22.5" fill="#1a1a1a" stroke="#1a1a1a" stroke-width="0.45">54 <tspan font-size="17" dy="-3.4">*</tspan></text>
</svg>
</body>
</html>
